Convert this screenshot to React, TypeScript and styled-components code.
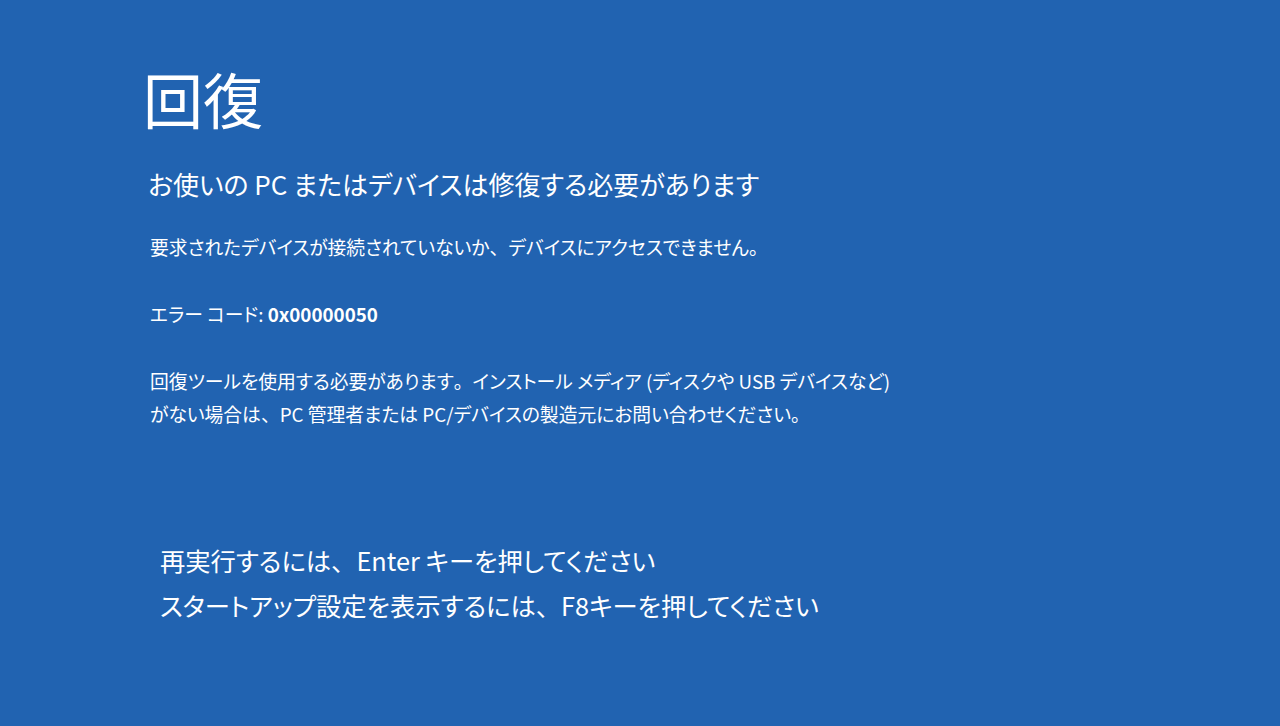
import React from "react";
import styled, { createGlobalStyle } from "styled-components";

const GlobalStyle = createGlobalStyle`
  html, body {
    margin: 0;
    padding: 0;
    background: #2163b1;
  }
  body {
    font-family: "Noto Sans CJK JP", "Noto Sans", sans-serif;
    color: #ffffff;
    font-feature-settings: "palt";
  }
`;

const Screen = styled.div`
  width: 1280px;
  height: 726px;
  box-sizing: border-box;
  background: #2163b1;
  padding: 58px 0 0 143px;
  display: flex;
  flex-direction: column;
  overflow: hidden;
`;

const Title = styled.h1`
  margin: 0;
  font-size: 60px;
  font-weight: 400;
  line-height: 80px;
`;

const Subtitle = styled.h2`
  margin: 28px 0 0 5px;
  font-size: 26px;
  font-weight: 400;
  line-height: 36px;
`;

const Body = styled.p<{ $top: number }>`
  margin: ${(p) => p.$top}px 0 0 7px;
  font-size: 18.8px;
  font-weight: 400;
  line-height: 33px;
`;

const Code = styled.b`
  font-weight: 700;
`;

/* full-width punctuation, as the Windows UI font sets it */
const Punct = styled.span`
  font-feature-settings: normal;
`;

const Actions = styled.div`
  margin: 108px 0 0 17px;
  display: flex;
  flex-direction: column;
`;

const Action = styled.div`
  font-size: 25.3px;
  line-height: 45px;
`;

export default function App() {
  return (
    <>
      <GlobalStyle />
      <Screen>
        <Title>回復</Title>
        <Subtitle>お使いの PC またはデバイスは修復する必要があります</Subtitle>
        <Body $top={28}>
          要求されたデバイスが接続されていないか<Punct>、</Punct>デバイスにアクセスできません<Punct>。</Punct>
        </Body>
        <Body $top={34}>
          エラー コード: <Code>0x00000050</Code>
        </Body>
        <Body $top={34}>
          回復ツールを使用する必要があります<Punct>。</Punct>インストール メディア (ディスクや USB デバイスなど)
          <br />
          がない場合は<Punct>、</Punct>PC 管理者または PC/デバイスの製造元にお問い合わせください<Punct>。</Punct>
        </Body>
        <Actions>
          <Action>
            再実行するには<Punct>、</Punct>Enter キーを押してください
          </Action>
          <Action>
            スタートアップ設定を表示するには<Punct>、</Punct>F8キーを押してください
          </Action>
        </Actions>
      </Screen>
    </>
  );
}
